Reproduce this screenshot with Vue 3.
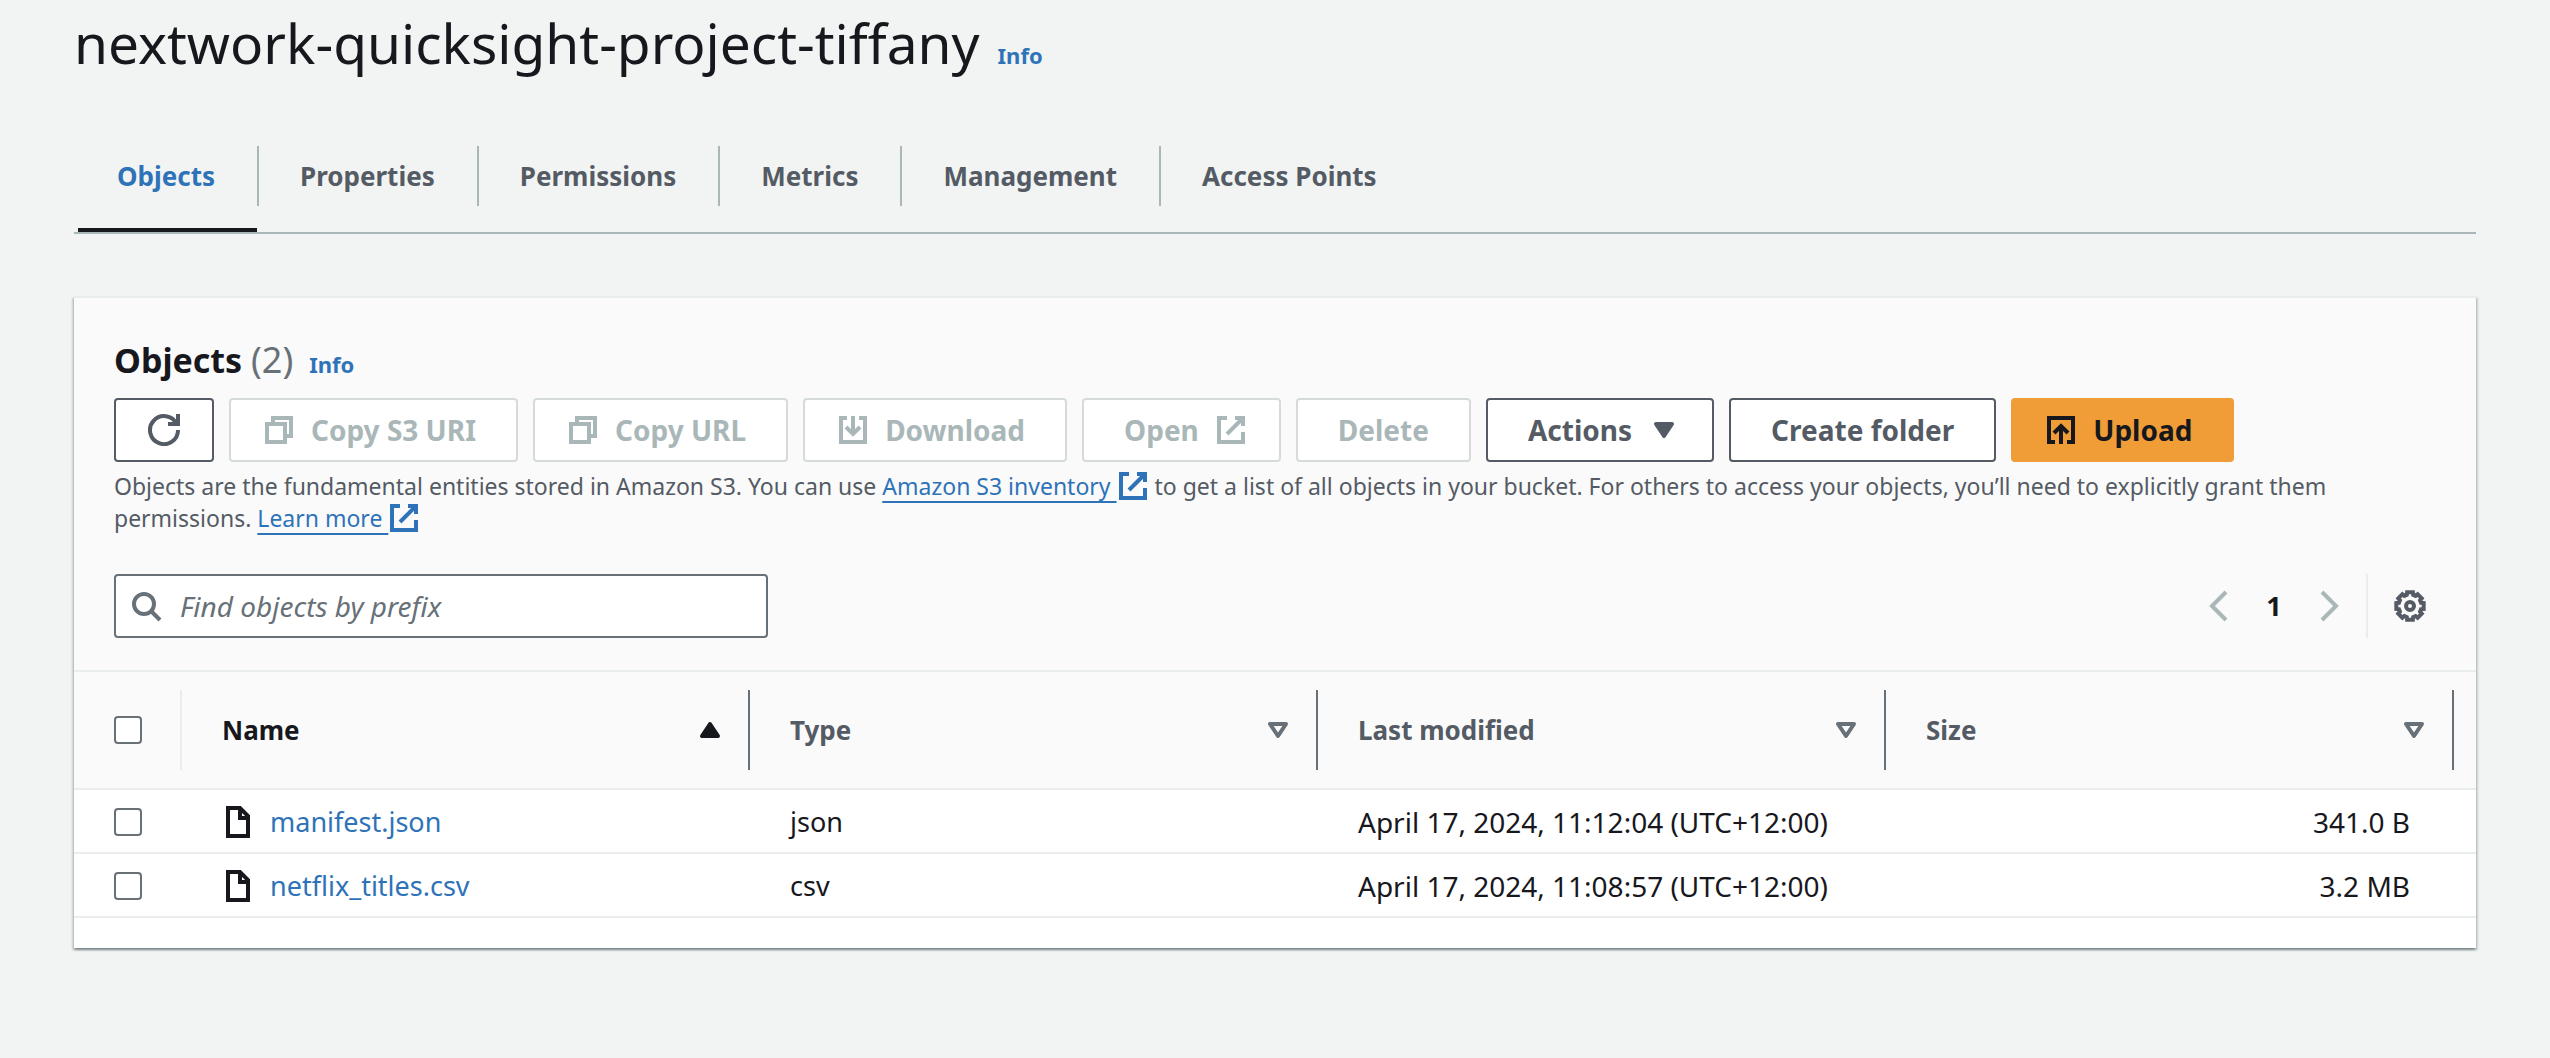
<script setup>
import { ref } from 'vue'

const tabs = ['Objects', 'Properties', 'Permissions', 'Metrics', 'Management', 'Access Points']
const activeTab = ref('Objects')
const query = ref('')

const columns = [
  { label: 'Name', sorted: true },
  { label: 'Type', sorted: false },
  { label: 'Last modified', sorted: false },
  { label: 'Size', sorted: false },
]

const files = [
  { name: 'manifest.json', type: 'json', modified: 'April 17, 2024, 11:12:04 (UTC+12:00)', size: '341.0 B' },
  { name: 'netflix_titles.csv', type: 'csv', modified: 'April 17, 2024, 11:08:57 (UTC+12:00)', size: '3.2 MB' },
]

// Outline of the eight-toothed settings gear, centred on 16,16.
const gearPoints = Array.from({ length: 8 }, (_, tooth) =>
  [[14, -12], [14, 12], [11.5, 16], [11.5, 29]].map(([radius, offset]) => {
    const angle = ((tooth * 45 + offset) * Math.PI) / 180
    return `${(16 + radius * Math.cos(angle)).toFixed(2)},${(16 + radius * Math.sin(angle)).toFixed(2)}`
  }).join(' ')
).join(' ')
</script>

<template>
  <main class="page">
    <header class="title-row">
      <h1>nextwork-quicksight-project-tiffany</h1>
      <a class="info" href="#">Info</a>
    </header>

    <div class="tabs" role="tablist">
      <div v-for="tab in tabs" :key="tab" class="tab" :class="{ active: tab === activeTab }">
        <button type="button" role="tab" :aria-selected="tab === activeTab" @click="activeTab = tab">{{ tab }}</button>
      </div>
    </div>

    <section class="panel">
      <div class="panel-head">
        <div class="heading">
          <h2>Objects <span class="count">(2)</span></h2>
          <a class="info" href="#">Info</a>
        </div>

        <div class="actions">
          <button class="btn" type="button" aria-label="Refresh">
            <svg class="icon lead trail" viewBox="0 0 16 16"><path d="M10 5h5V0M15 8a7 7 0 1 1-.7-3" /></svg>
          </button>
          <button class="btn" type="button" disabled>
            <svg class="icon lead" viewBox="0 0 16 16"><path d="M2 5h9v9H2zM5 5V2h9v9h-3" /></svg>
            Copy S3 URI
          </button>
          <button class="btn" type="button" disabled>
            <svg class="icon lead" viewBox="0 0 16 16"><path d="M2 5h9v9H2zM5 5V2h9v9h-3" /></svg>
            Copy URL
          </button>
          <button class="btn" type="button" disabled>
            <svg class="icon lead" viewBox="0 0 16 16"><path d="M5 2H2v12h12V2h-3M8 1v9M4.500 6.500l3.500 3.500 3.500-3.500" /></svg>
            Download
          </button>
          <button class="btn" type="button" disabled>
            Open
            <svg class="icon trail" viewBox="0 0 16 16"><path d="M10 2h4v4M6 10l8-8M14 9v5H2V2h4" /></svg>
          </button>
          <button class="btn" type="button" disabled>Delete</button>
          <button class="btn" type="button">
            Actions
            <svg class="icon solid trail" viewBox="0 0 16 16"><path d="M4 5h8l-4 6z" /></svg>
          </button>
          <button class="btn" type="button">Create folder</button>
          <button class="btn primary" type="button">
            <svg class="icon lead" viewBox="0 0 16 16"><path d="M5 14H2V2h12v12h-3M8 15V6M4.500 9.500l3.500-3.500 3.500 3.500" /></svg>
            Upload
          </button>
        </div>

        <p class="description">
          Objects are the fundamental entities stored in Amazon S3. You can use
          <a href="#">Amazon S3 inventory&nbsp;<svg class="icon" viewBox="0 0 16 16"><path d="M10 2h4v4M6 10l8-8M14 9v5H2V2h4" /></svg></a>
          to get a list of all objects in your bucket. For others to access your objects, you’ll need to explicitly grant them permissions.
          <a href="#">Learn more&nbsp;<svg class="icon" viewBox="0 0 16 16"><path d="M10 2h4v4M6 10l8-8M14 9v5H2V2h4" /></svg></a>
        </p>

        <div class="tools">
          <label class="search">
            <svg class="icon" viewBox="0 0 16 16"><circle cx="7" cy="7" r="5" /><path d="M15 15l-4.500-4.500" /></svg>
            <input v-model="query" type="search" placeholder="Find objects by prefix" aria-label="Find objects by prefix" />
          </label>
          <nav class="pagination" aria-label="Pages">
            <button type="button" disabled aria-label="Previous page">
              <svg class="icon" viewBox="0 0 32 32"><path d="M23 2L9 16l14 14" /></svg>
            </button>
            <button class="current" type="button">1</button>
            <button type="button" disabled aria-label="Next page">
              <svg class="icon" viewBox="0 0 32 32"><path d="M9 2l14 14L9 30" /></svg>
            </button>
          </nav>
          <button class="settings" type="button" aria-label="Preferences">
            <svg class="icon" viewBox="0 0 32 32"><polygon :points="gearPoints" /><circle cx="16" cy="16" r="4" /></svg>
          </button>
        </div>
      </div>

      <table>
        <colgroup>
          <col class="col-select" />
          <col v-for="column in columns" :key="column.label" />
          <col class="col-end" />
        </colgroup>
        <thead>
          <tr>
            <th scope="col"><div class="head-select"><input type="checkbox" aria-label="Select all objects" /></div></th>
            <th v-for="column in columns" :key="column.label" scope="col">
              <div class="head-cell" :class="{ sorted: column.sorted }">
                {{ column.label }}
                <svg class="icon" viewBox="0 0 16 16"><path :d="column.sorted ? 'M4 11h8l-4-6z' : 'M4 5h8l-4 6z'" /></svg>
              </div>
            </th>
            <td></td>
          </tr>
        </thead>
        <tbody>
          <tr v-for="file in files" :key="file.name">
            <td><input type="checkbox" :aria-label="'Select ' + file.name" /></td>
            <td>
              <a class="file" href="#">
                <svg class="icon" viewBox="0 0 16 16"><path d="M3 1h6l4 4v10H3zM9 1v5h4" /></svg>
                {{ file.name }}
              </a>
            </td>
            <td>{{ file.type }}</td>
            <td class="modified">{{ file.modified }}</td>
            <td class="size" colspan="2">{{ file.size }}</td>
          </tr>
        </tbody>
      </table>
    </section>
  </main>
</template>

<style>
body {
  margin: 0;
  background: #f2f4f3;
}
</style>

<style scoped>
.page {
  padding: 7px 74px 48px;
  font-family: "Noto Sans", "Open Sans", sans-serif;
  font-size: 27px;
  line-height: 44px;
  color: #17181d;
}

.page * {
  box-sizing: border-box;
}

button,
input {
  font: inherit;
  color: inherit;
}

button {
  padding: 0;
  border: 0;
  background: none;
  cursor: pointer;
}

a {
  color: #2e73b8;
  text-decoration: none;
}

h1,
h2,
p {
  margin: 0;
}

.icon {
  flex: none;
  width: 32px;
  height: 32px;
  fill: none;
  stroke: currentColor;
  stroke-width: 2;
}

.icon[viewBox="0 0 32 32"] {
  stroke-width: 4;
}

.info {
  font-size: 22px;
  font-weight: 700;
}

.title-row {
  display: flex;
  align-items: baseline;
  gap: 18px;
}

h1 {
  font-size: 55px;
  font-weight: 400;
  line-height: 72px;
}

/* Tabs */
.tabs {
  display: flex;
  margin-top: 67px;
  padding-left: 2px;
  border-bottom: 2px solid #aab7b8;
}

.tab {
  position: relative;
  padding-bottom: 26px;
}

.tab button {
  display: block;
  height: 60px;
  padding: 0 42px 0 41px;
  border-right: 2px solid #aab7b8;
  font-size: 26px;
  font-weight: 700;
  color: #545b64;
}

.tab:last-child button {
  border-right: 0;
}

.tab.active button {
  color: #2e73b8;
}

.tab.active::after {
  content: "";
  position: absolute;
  left: 2px;
  right: 2px;
  bottom: 0;
  height: 4px;
  background: #17181d;
}

/* Panel */
.panel {
  margin-top: 62px;
  padding-bottom: 30px;
  border-top: 2px solid #eaeded;
  background: #fff;
  box-shadow:
    0 2px 2px 0 rgba(0, 28, 36, 0.3),
    2px 2px 2px 0 rgba(0, 28, 36, 0.15),
    -2px 2px 2px 0 rgba(0, 28, 36, 0.15);
}

.panel-head {
  padding: 40px 40px 32px;
  background: #fafafa;
}

.heading {
  display: flex;
  align-items: baseline;
  gap: 16px;
}

h2 {
  font-size: 34px;
  font-weight: 700;
}

.count {
  font-size: 36px;
  font-weight: 400;
  color: #687078;
}

.actions {
  display: flex;
  flex-wrap: wrap;
  gap: 15px;
  margin-top: 12px;
}

.btn {
  display: flex;
  align-items: center;
  gap: 16px;
  height: 64px;
  padding: 0 40px;
  border: 2px solid #545b64;
  border-radius: 4px;
  background: #fff;
  font-size: 28px;
  font-weight: 700;
  color: #545b64;
}

.btn .lead {
  margin-left: -8px;
}

.btn .trail {
  margin-right: -8px;
}

.btn:disabled {
  border-color: #d5dbdb;
  color: #aab7b8;
  cursor: default;
}

.btn.primary {
  border-color: #f09d38;
  background: #f09d38;
  color: #17181d;
}

.icon.solid {
  fill: currentColor;
  stroke-linejoin: round;
}

.description {
  margin-top: 8px;
  font-size: 23px;
  line-height: 32px;
  color: #545b64;
}

.description a {
  text-decoration: underline;
  text-decoration-thickness: 2px;
  text-decoration-skip-ink: none;
  text-underline-offset: 6px;
}

.description .icon {
  vertical-align: -7px;
}

/* Search and paging */
.tools {
  display: flex;
  align-items: center;
  margin-top: 40px;
}

.search {
  display: flex;
  align-items: center;
  gap: 18px;
  width: 654px;
  height: 64px;
  margin-right: auto;
  padding: 0 14px;
  border: 2px solid #687078;
  border-radius: 4px;
  background: #fff;
  color: #687078;
}

.search input {
  flex: 1;
  min-width: 0;
  padding: 0;
  border: 0;
  outline: 0;
  background: none;
  font-size: 28px;
}

.search input::placeholder {
  font-style: italic;
  color: #687078;
  opacity: 1;
}

.pagination {
  display: flex;
  align-items: center;
  gap: 23px;
  padding-right: 21px;
}

.pagination button {
  display: flex;
  justify-content: center;
  width: 32px;
}

.pagination button:disabled {
  color: #aab7b8;
}

.pagination .current {
  font-weight: 700;
}

.settings {
  display: flex;
  align-items: center;
  height: 64px;
  padding: 0 10px 0 26px;
  border-left: 2px solid #eaeded;
  color: #545b64;
}

/* Table */
table {
  width: 100%;
  border-collapse: separate;
  border-spacing: 0;
  table-layout: fixed;
}

.col-select {
  width: 108px;
}

.col-end {
  width: 22px;
}

thead th,
thead td {
  padding: 18px 0;
  border-top: 2px solid #eaeded;
  border-bottom: 2px solid #eaeded;
  background: #fafafa;
}

.head-select,
.head-cell {
  display: flex;
  align-items: center;
  height: 80px;
  border-right: 2px solid #687078;
}

.head-select {
  padding-left: 40px;
  border-right-color: #eaeded;
}

.head-cell {
  justify-content: space-between;
  padding: 0 22px 0 40px;
  font-size: 26px;
  font-weight: 700;
  color: #545b64;
}

.head-cell .icon {
  color: #687078;
  stroke-linejoin: round;
}

.head-cell.sorted,
.head-cell.sorted .icon {
  color: #17181d;
}

.head-cell.sorted .icon {
  fill: currentColor;
}

tbody td {
  height: 64px;
  padding: 2px 0 0 40px;
  border-bottom: 2px solid #eaeded;
}

tbody .modified,
tbody .size {
  font-size: 28px;
}

tbody .size {
  padding-right: 66px;
  text-align: right;
}

input[type="checkbox"] {
  appearance: none;
  display: block;
  width: 28px;
  height: 28px;
  margin: 0;
  border: 2px solid #687078;
  border-radius: 4px;
  background: #fff;
}

.file {
  display: flex;
  align-items: center;
  gap: 16px;
}

.file .icon {
  color: #17181d;
}
</style>
